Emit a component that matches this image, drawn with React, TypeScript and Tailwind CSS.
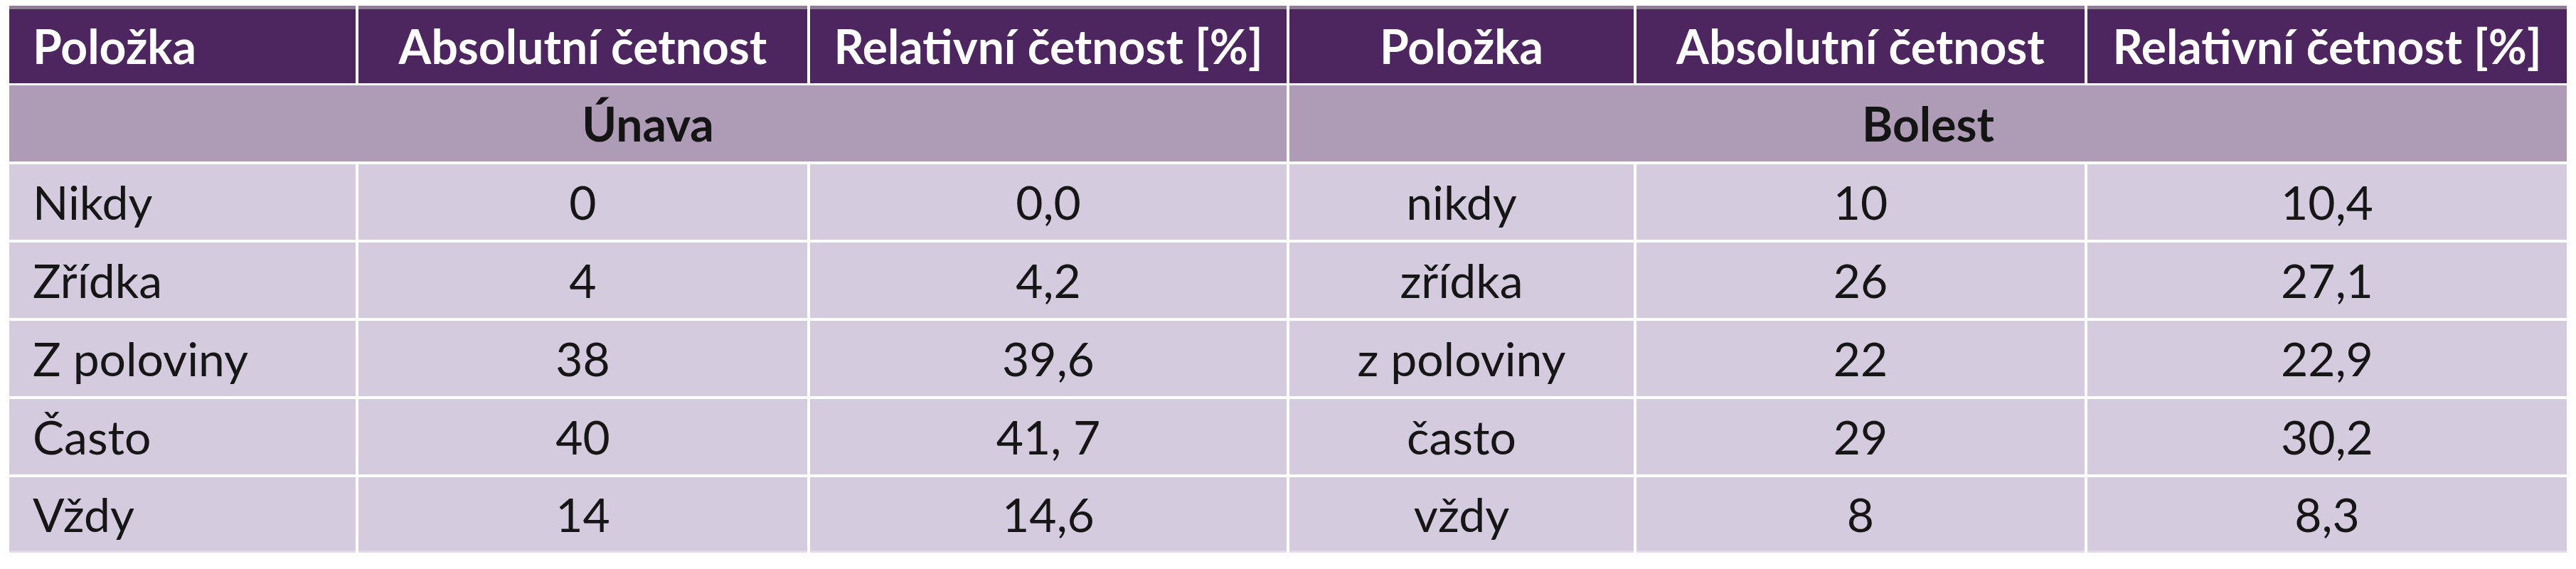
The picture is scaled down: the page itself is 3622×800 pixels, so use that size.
import React from 'react';

type Row = { label: string; abs: string; rel: string };

const UNAVA: Row[] = [
  { label: 'Nikdy', abs: '0', rel: '0,0' },
  { label: 'Zřídka', abs: '4', rel: '4,2' },
  { label: 'Z poloviny', abs: '38', rel: '39,6' },
  { label: 'Často', abs: '40', rel: '41, 7' },
  { label: 'Vždy', abs: '14', rel: '14,6' },
];

const BOLEST: Row[] = [
  { label: 'nikdy', abs: '10', rel: '10,4' },
  { label: 'zřídka', abs: '26', rel: '27,1' },
  { label: 'z poloviny', abs: '22', rel: '22,9' },
  { label: 'často', abs: '29', rel: '30,2' },
  { label: 'vždy', abs: '8', rel: '8,3' },
];

const headCell = 'h-[109px] border-t-[5px] border-[#8e7d94] bg-[#4d2660] text-white font-bold flex items-center';
const bodyCell = 'h-[106px] bg-[#d5cbde] text-[#161616] flex items-center';

export default function App() {
  return (
    <div
      className="bg-white w-[3622px] h-[800px] pt-[8px] pl-[13px] text-[66px] leading-none"
      style={{ fontFamily: 'Lato, "Open Sans", sans-serif' }}
    >
      <div className="grid grid-cols-[487px_631px_670px_484px_630px_674px] gap-x-[4px] gap-y-[4px]">
        {/* header row */}
        <div className={`${headCell} pl-[33px]`}>Položka</div>
        <div className={`${headCell} justify-center`}>Absolutní četnost</div>
        <div className={`${headCell} justify-center`}>Relativní četnost [%]</div>
        <div className={`${headCell} justify-center`}>Položka</div>
        <div className={`${headCell} justify-center`}>Absolutní četnost</div>
        <div className={`${headCell} justify-center`}>Relativní četnost [%]</div>

        {/* section titles */}
        <div className="col-span-3 h-[107px] -mt-px bg-[#ae9bb6] text-[#141414] font-bold flex items-center justify-center">
          Únava
        </div>
        <div className="col-span-3 h-[107px] -mt-px bg-[#ae9bb6] text-[#141414] font-bold flex items-center justify-center">
          Bolest
        </div>

        {/* data rows */}
        {UNAVA.map((u, i) => {
          const b = BOLEST[i];
          const last = i === UNAVA.length - 1 ? ' border-b-[3px] border-[#e2dbe7]' : '';
          return (
            <React.Fragment key={u.label}>
              <div className={`${bodyCell} pl-[33px]${last}`}>{u.label}</div>
              <div className={`${bodyCell} justify-center${last}`}>{u.abs}</div>
              <div className={`${bodyCell} justify-center${last}`}>{u.rel}</div>
              <div className={`${bodyCell} justify-center${last}`}>{b.label}</div>
              <div className={`${bodyCell} justify-center${last}`}>{b.abs}</div>
              <div className={`${bodyCell} justify-center${last}`}>{b.rel}</div>
            </React.Fragment>
          );
        })}
      </div>
    </div>
  );
}
